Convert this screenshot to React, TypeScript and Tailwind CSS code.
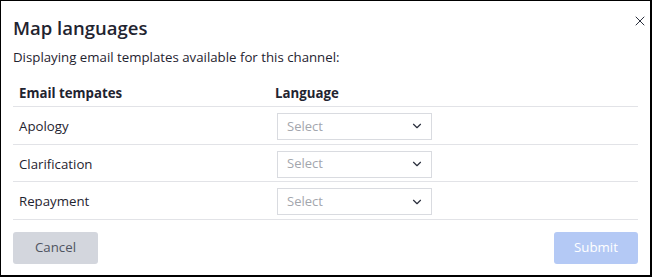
import { ChevronDown, X } from "lucide-react"

const templates = ["Apology", "Clarification", "Repayment"]

export default function App() {
  return (
    <div
      className="w-[652px] h-[277px] bg-white border-t border-l border-r-2 border-b-2 border-black text-[#1f2430]"
      style={{ fontFamily: '"Open Sans", sans-serif' }}
    >
      <div className="flex items-start justify-between pl-[12px] pr-[1px] h-[40px]">
        <h2 className="mt-[18px] text-[18.5px] font-semibold leading-none">Map languages</h2>
        <button className="mt-[11px] w-[18px] h-[18px] flex items-center justify-center text-[#2a2f3d]">
          <X size={16} strokeWidth={1.5} />
        </button>
      </div>

      <p className="pl-[12px] mt-[7px] text-[13.25px] leading-[18px]">
        Displaying email templates available for this channel:
      </p>

      <div className="mx-[12px] mt-[18px]">
        <div className="flex items-end h-[23px] pb-[2px] border-b border-[#e2e3e7] text-[13.25px] font-bold">
          <div className="w-[262px] pl-[6px]">Email tempates</div>
          <div>Language</div>
        </div>
        {templates.map((name) => (
          <div key={name} className="flex items-center h-[37.7px] pt-[2px] border-b border-[#e2e3e7] text-[13.25px]">
            <div className="w-[264px] pl-[6px] pt-[1px]">{name}</div>
            <div className="w-[155px] h-[27px] border border-[#d9dbe0] flex items-center justify-between pl-[9px] pr-[7px]">
              <span className="text-[13px] text-[#a3a6ad]">Select</span>
              <ChevronDown size={14} strokeWidth={2} className="text-[#2a2f3d]" />
            </div>
          </div>
        ))}

        <div className="flex items-center justify-between mt-[12px]">
          <button className="w-[85px] h-[32px] rounded-[3px] bg-[#d3d6dd] text-[13.25px] text-[#4f5461]">
            Cancel
          </button>
          <button className="w-[84px] h-[32px] rounded-[3px] bg-[#b4c9f5] text-[13.25px] text-white">
            Submit
          </button>
        </div>
      </div>
    </div>
  )
}
